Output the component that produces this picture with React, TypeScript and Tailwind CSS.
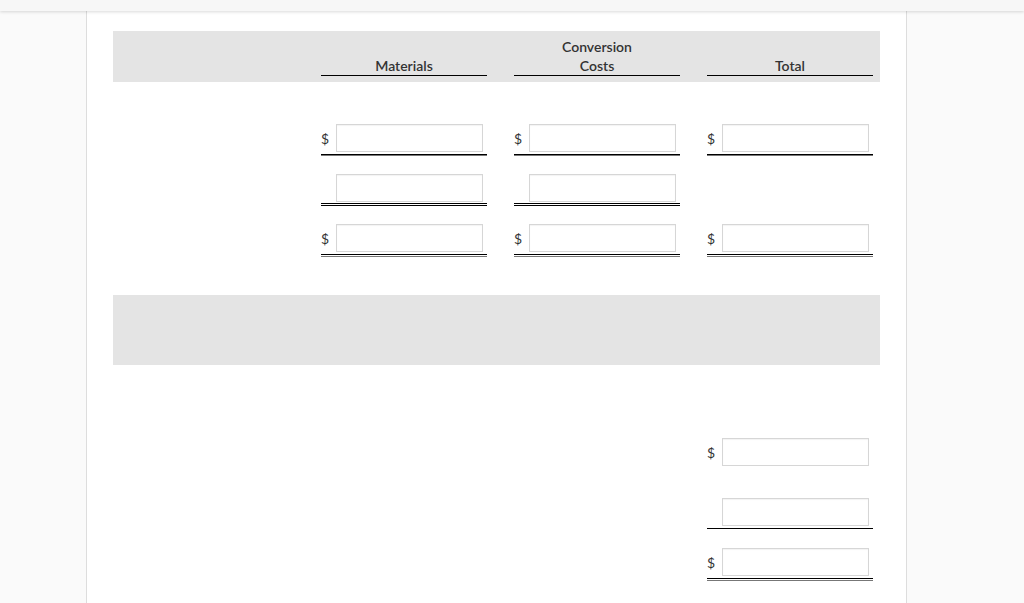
import React from 'react';

type Line = 'none' | 'single' | 'heavy' | 'double' | 'doubleGray';

function Cell({ dollar = false, line = 'single', gap = 'pb-[2px]' }: { dollar?: boolean; line?: Line; gap?: string }) {
  return (
    <div>
      <div className={`flex items-center ${gap}`}>
        <span className="w-[15px] text-[14px] text-[#333]">{dollar ? '$' : ''}</span>
        <input
          type="text"
          className="h-[28px] w-[147px] border border-[#d6d6d6] bg-white shadow-[inset_0_1px_1px_rgba(0,0,0,0.05)] outline-none"
        />
      </div>
      {line === 'single' && <div className="h-px bg-black" />}
      {line === 'heavy' && (
        <div>
          <div className="h-px bg-black" />
          <div className="h-px bg-[#777]" />
        </div>
      )}
      {line === 'double' && (
        <div>
          <div className="h-px bg-black" />
          <div className="h-px bg-white" />
          <div className="h-px bg-black" />
        </div>
      )}
      {line === 'doubleGray' && (
        <div>
          <div className="h-px bg-black" />
          <div className="h-px bg-white" />
          <div className="h-px bg-[#777]" />
        </div>
      )}
    </div>
  );
}

function HeadCell({ children }: { children: React.ReactNode }) {
  return (
    <div className="flex flex-col justify-end border-b border-black text-center text-[14px] leading-[19px] font-semibold text-[#333]">
      {children}
    </div>
  );
}

export default function App() {
  return (
    <div className="flex h-screen flex-col overflow-hidden bg-[#fafafa] font-['Lato','Liberation_Sans',sans-serif]">
      <div className="relative z-10 h-[11px] shrink-0 bg-[#f7f7f7] shadow-[0_1px_3px_rgba(0,0,0,0.15)]" />
      <div className="flex flex-1">
        <div className="w-[86px] shrink-0" />
        <main className="w-[821px] shrink-0 border-x border-[#ddd] bg-white px-[26px] pt-[20px]">
          <div className="grid grid-cols-[1fr_166px_166px_166px] gap-x-[27px] bg-[#e4e4e4] pt-[6px] pr-[7px] pb-[6px]">
            <div />
            <HeadCell>Materials</HeadCell>
            <HeadCell>
              <span>Conversion</span>
              <span>Costs</span>
            </HeadCell>
            <HeadCell>Total</HeadCell>
          </div>

          <div className="mt-[42px] grid grid-cols-[1fr_166px_166px_166px] gap-x-[27px] gap-y-[18px] pr-[7px]">
            <div />
            <Cell dollar line="heavy" />
            <Cell dollar line="heavy" />
            <Cell dollar line="heavy" />

            <div />
            <Cell line="double" gap="pb-[1px]" />
            <Cell line="double" gap="pb-[1px]" />
            <div />

            <div />
            <Cell dollar line="doubleGray" />
            <Cell dollar line="doubleGray" />
            <Cell dollar line="doubleGray" />
          </div>

          <div className="mt-[38px] h-[70px] bg-[#e4e4e4]" />

          <div className="mt-[73px] grid grid-cols-[1fr_166px_166px_166px] gap-x-[27px] pr-[7px]">
            <div className="col-start-4">
              <Cell dollar line="none" />
            </div>
            <div className="col-start-4 mt-[30px]">
              <Cell line="single" />
            </div>
            <div className="col-start-4 mt-[19px]">
              <Cell dollar line="doubleGray" />
            </div>
          </div>
        </main>
        <div className="flex-1" />
      </div>
    </div>
  );
}
